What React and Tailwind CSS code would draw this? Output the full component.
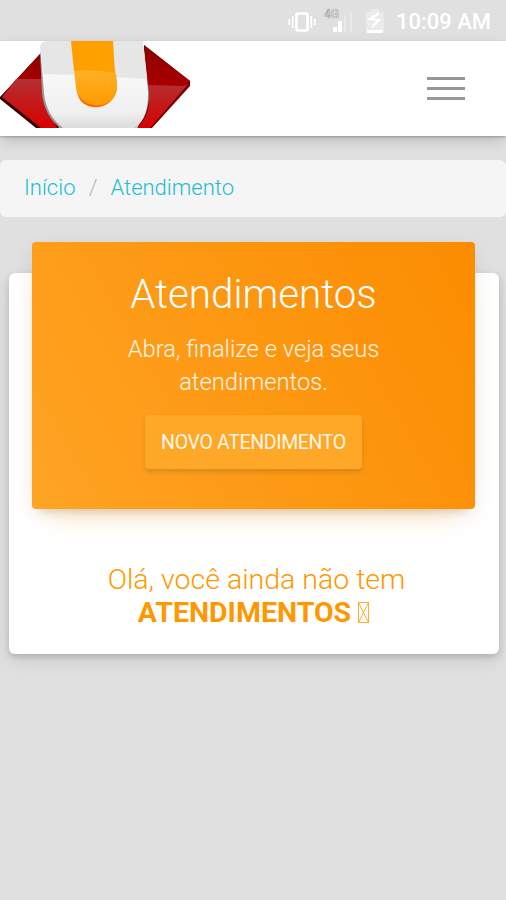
function StatusBar() {
    return (
        <div className="flex h-[41px] items-center justify-end bg-[#e0e0e0] pt-[2px] pr-[15px] text-white">
            <svg width="28" height="22" viewBox="0 0 28 22" fill="none" stroke="currentColor" strokeWidth="1.8">
                <rect x="8.5" y="2.5" width="11" height="17" rx="1" strokeWidth="2.6" />
                <path d="M4.7 5v12M23.3 5v12M1.3 8v6M26.7 8v6" />
            </svg>
            <svg className="ml-[8px]" width="30" height="28" viewBox="0 0 30 28">
                <text x="0" y="10" fontSize="12" fontFamily="Roboto" fontWeight="500" fill="#eee" stroke="#aaa" strokeWidth="0.7">4G</text>
                <path fill="#fff" d="M9 19h4v5H9zM14 13h4v11h-4z" />
                <path fill="#fff" fillOpacity="0.3" d="M20 8h2v16h-2zM26 4h2v20h-2z" />
            </svg>
            <svg className="ml-[12px]" width="18" height="26" viewBox="0 0 18 26">
                <path fill="#fff" fillOpacity="0.35" d="M5 0h8v3h5v19H0V3h5z" />
                <path fill="#fff" d="M1 21h16v3H1z" />
                <path fill="none" stroke="#fff" strokeWidth="2.2" d="M13 4l-9 6 9 1-7 7" />
            </svg>
            <span className="ml-[12px] text-[22px] leading-none font-medium">10:09 AM</span>
        </div>
    );
}

function Logo() {
    return (
        <svg className="block" width="192" height="88" viewBox="0 0 192 88">
            <defs>
                <linearGradient id="redDark" x1="0" y1="0" x2="0" y2="1">
                    <stop offset="0" stopColor="#8a0000" />
                    <stop offset="1" stopColor="#a80000" />
                </linearGradient>
                <linearGradient id="redLight" x1="0" y1="0" x2="0" y2="1">
                    <stop offset="0" stopColor="#b23032" />
                    <stop offset="1" stopColor="#d80000" />
                </linearGradient>
                <linearGradient id="white" gradientUnits="userSpaceOnUse" x1="0" y1="33" x2="0" y2="87">
                    <stop offset="0" stopColor="#f8f8f8" />
                    <stop offset="0.7" stopColor="#f0f0f0" />
                    <stop offset="1" stopColor="#dcdcdc" />
                </linearGradient>
                <linearGradient id="orange" x1="0" y1="0" x2="0" y2="1">
                    <stop offset="0" stopColor="#ffb32a" />
                    <stop offset="1" stopColor="#ff9900" />
                </linearGradient>
            </defs>
            <path fill="#330000" d="M0 56L41 12l18 75H36L0 58z" />
            <path fill="url(#redDark)" d="M40 13l2 26H16z" />
            <path fill="url(#redLight)" d="M16 38h26l3 22 12 27H41L2 56z" />
            <path fill="#760000" d="M144 4l46 36v5l-38 42h-14z" />
            <path fill="url(#redLight)" d="M147 44h39l3-2-39 45h-13q11-10 12-24z" />
            <path fill="url(#redDark)" d="M144 4l46 36-6 5-37-1z" />
            <path fill="#999" d="M42 8h102l5 45q0 22-13 34H60Q44 74 42 52L40 12z" />
            <path fill="url(#white)" d="M40 5q2-5 8-5h95l5 50q1 26-13 37H63Q46 74 44 52z" />
            <path fill="#e6e6e6" d="M40 5q2-5 8-5h95l4 38-32-2-41-2-31-1z" />
            <path fill="#ff6a00" d="M75 32l2 18c2 23 39 22 40-5l-1-12z" />
            <path fill="url(#orange)" d="M74 28h41l2 17c0 26-38 25-41 2z" />
            <path fill="#ff9f00" d="M71 0h42l2 32q-20-4-41-2z" />
        </svg>
    );
}

function Navbar() {
    return (
        <nav className="relative flex h-[95px] items-start justify-between bg-white shadow-[0_5px_14px_-2px_rgba(0,0,0,0.2),0_1px_2px_rgba(0,0,0,0.25)]">
            <Logo />
            <button className="mt-[36px] mr-[41px] flex w-[38px] flex-col gap-[7px]" aria-label="Menu">
                <span className="h-[3px] w-full bg-[#979797]"></span>
                <span className="h-[3px] w-full bg-[#979797]"></span>
                <span className="h-[3px] w-full bg-[#979797]"></span>
            </button>
        </nav>
    );
}

function Breadcrumb() {
    return (
        <div className="mt-6 flex h-[57px] items-center rounded-md bg-[#f5f5f5] px-6 pb-[2px] text-[22px] font-light text-[#26bccf]">
            <a href="#">Início</a>
            <span className="w-[35px] text-center text-[#b5b5b5]">/</span>
            <a href="#">Atendimento</a>
        </div>
    );
}

function CardHeader() {
    return (
        <div className="-mt-[31px] flex h-[267px] flex-col items-center rounded-[4px] bg-linear-[60deg,#ffa424,#fb8c00] text-center text-white shadow-[0_16px_28px_-16px_rgba(255,152,0,0.4),0_4px_20px_rgba(0,0,0,0.06),0_8px_10px_-8px_rgba(0,0,0,0.2)]">
            <h2 className="mt-[30px] text-[40.3px] leading-[46px] font-light">Atendimentos</h2>
            <p className="mt-[15px] text-[23.7px] leading-[33px] font-light text-white/90">
                Abra, finalize e veja seus
                <br />
                atendimentos.
            </p>
            <button className="mt-[16px] h-[54px] w-[217px] rounded-[4px] bg-[#ffa726] pt-[2px] text-[19.5px] tracking-[-0.35px] text-white/90 shadow-[0_3px_4px_rgba(130,100,50,0.3)]">
                NOVO ATENDIMENTO
            </button>
        </div>
    );
}

function App() {
    return (
        <div className="flex min-h-[900px] flex-col bg-[#e0e0e0] font-['Roboto',sans-serif]">
            <StatusBar />
            <Navbar />
            <Breadcrumb />
            <div className="mt-14 mr-[7px] ml-[9px] h-[381px] rounded-md bg-white pr-6 pl-[23px] shadow-[0_3px_6px_rgba(0,0,0,0.14),0_6px_18px_rgba(0,0,0,0.1)]">
                <CardHeader />
                <div className="mt-[54px] text-center text-[28.5px] leading-[33px] text-[#ff9800]">
                    <p className="pl-[6px] font-light">Olá, você ainda não tem</p>
                    <p className="flex items-center justify-center gap-[7px] font-bold">
                        ATENDIMENTOS
                        <svg width="11" height="21" viewBox="0 0 11 21" fill="none" stroke="currentColor" strokeWidth="0.8">
                            <path d="M.5.5h10v20H.5zM.5.5l10 20M10.5.5l-10 20" />
                        </svg>
                    </p>
                </div>
            </div>
        </div>
    );
}

export default App;
